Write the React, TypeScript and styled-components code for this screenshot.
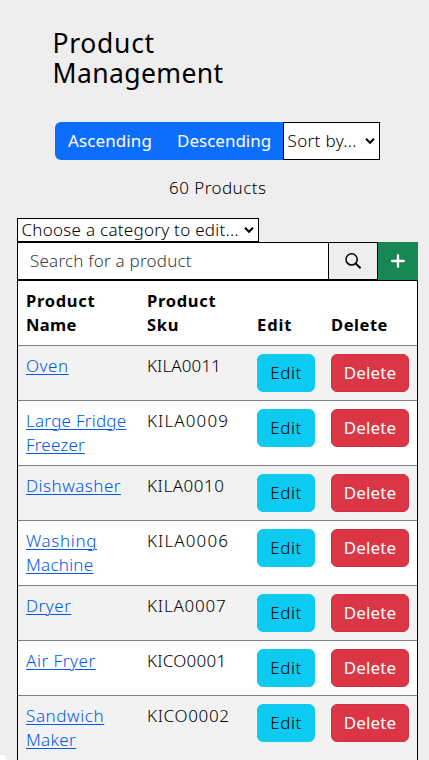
import React from 'react';
import styled, { createGlobalStyle } from 'styled-components';

const GlobalStyle = createGlobalStyle`
  *, *::before, *::after { box-sizing: border-box; }
  body {
    margin: 0;
    height: 100vh;
    overflow: hidden;
    background: #eeeeee;
    color: #000;
    font: 300 17px/24px "Noto Sans", sans-serif;
  }
`;

const Page = styled.main`
  padding: 28px 11px 0 17px;
`;

const Title = styled.h1`
  display: flex;
  flex-direction: column;
  margin: 0 0 34px 35.5px;
  font-size: 26.5px;
  line-height: 30px;
  font-weight: 400;
`;

const Tracked = styled.span<{ $track: number }>`
  letter-spacing: ${({ $track }) => $track}px;
  white-space: nowrap;
`;

const SortBar = styled.div`
  display: flex;
  height: 38px;
  width: 325px;
  margin-left: 38px;
`;

const SortButtons = styled.div`
  display: flex;
  flex: 1;
  background: #0d6efd;
  border-radius: 6px 0 0 6px;
`;

const SortButton = styled.button<{ $width: number }>`
  width: ${({ $width }) => $width}px;
  padding: 0 0 0 13px;
  border: 0;
  background: none;
  color: #fff;
  font: inherit;
  font-weight: 400;
  text-align: left;
`;

const Picker = styled.div<{ $width: number; $height: number }>`
  display: flex;
  align-items: center;
  justify-content: space-between;
  width: ${({ $width }) => $width}px;
  height: ${({ $height }) => $height}px;
  padding: 0 4px 0 3.5px;
  border: 1px solid #000;
  background: #fff;
`;

const Count = styled.p`
  margin: 16px 0 18px 152px;
`;

const SearchRow = styled.div`
  display: flex;
  height: 38px;
`;

const SearchField = styled.div`
  flex: 1;
  display: flex;
  align-items: center;
  padding-left: 12px;
  border: 1px solid #000;
  background: #fff;
  color: #353b41;
`;

const IconButton = styled.button<{ $add?: boolean }>`
  display: flex;
  align-items: center;
  justify-content: center;
  width: ${({ $add }) => ($add ? 40 : 50)}px;
  margin-left: ${({ $add }) => ($add ? 0 : -1)}px;
  padding: 0;
  border: ${({ $add }) => ($add ? '0' : '1px solid #000')};
  background: ${({ $add }) => ($add ? '#198754' : '#eeeeee')};
`;

const Table = styled.section`
  border: 1px solid #000;
  background: #fff;
`;

const Row = styled.div<{ $striped?: boolean }>`
  display: grid;
  grid-template-columns: 121px 110px 74px 1fr;
  padding: 8px 0 8px 8px;
  border-top: 1px solid #808080;
  background: ${({ $striped }) => ($striped ? '#f2f2f2' : '#fff')};
`;

const HeadRow = styled(Row)`
  align-items: end;
  border-top: 0;
  font-weight: 700;
  font-size: 16.5px;
`;

const Cell = styled.div`
  display: flex;
  flex-direction: column;
  align-items: flex-start;
`;

const NameLink = styled.a`
  display: flex;
  flex-direction: column;
  align-items: flex-start;
  color: #0058ee;
  text-decoration: underline;
  text-decoration-thickness: 1px;
  text-underline-offset: 2px;
`;

const ActionButton = styled.button<{ $danger?: boolean }>`
  width: ${({ $danger }) => ($danger ? 78 : 58)}px;
  height: 38px;
  padding: 0;
  border: 1px solid ${({ $danger }) => ($danger ? '#cf2f41' : '#0dcaf0')};
  border-radius: 6px;
  background: ${({ $danger }) => ($danger ? '#dc3545' : '#0dcaf0')};
  color: ${({ $danger }) => ($danger ? '#fff' : '#000')};
  font: inherit;
  font-weight: ${({ $danger }) => ($danger ? 400 : 300)};
`;

const CornerStatus = styled.div`
  position: fixed;
  left: 0;
  bottom: 0;
  width: 6px;
  height: 5px;
  border-radius: 0 2px 0 0;
  background: #fff;
`;

type Word = [text: string, track: number];

const products: { name: Word[]; sku: Word }[] = [
  { name: [['Oven', 0.5]], sku: ['KILA0011', 0.1] },
  { name: [['Large Fridge', 0.25], ['Freezer', 0.2]], sku: ['KILA0009', 1.1] },
  { name: [['Dishwasher', 0.5]], sku: ['KILA0010', 0.55] },
  { name: [['Washing', 0.65], ['Machine', 0.25]], sku: ['KILA0006', 1.1] },
  { name: [['Dryer', 0.5]], sku: ['KILA0007', 0.8] },
  { name: [['Air Fryer', 0.55]], sku: ['KICO0001', 0.25] },
  { name: [['Sandwich', 0.6], ['Maker', 0.3]], sku: ['KICO0002', 0.65] },
];

const headings: Word[][] = [
  [['Product', 0.7], ['Name', 0.35]],
  [['Product', 0.7], ['Sku', 0.7]],
  [['Edit', 0.9]],
  [['Delete', 0.55]],
];

const Words = ({ lines }: { lines: Word[] }) => (
  <>
    {lines.map(([text, track]) => (
      <Tracked key={text} $track={track}>{text}</Tracked>
    ))}
  </>
);

const Chevron = () => (
  <svg width="10" height="8" viewBox="0 0 10 8" fill="none" stroke="#000" strokeWidth="2">
    <path d="M1 1.8 5 5.8 9 1.8" />
  </svg>
);

export default function App() {
  return (
    <>
      <GlobalStyle />
      <Page>
        <Title><Words lines={[['Product', 0.7], ['Management', 0.4]]} /></Title>
        <SortBar>
          <SortButtons>
            <SortButton $width={109}><Tracked $track={0.1}>Ascending</Tracked></SortButton>
            <SortButton $width={119}><Tracked $track={0}>Descending</Tracked></SortButton>
          </SortButtons>
          <Picker $width={97} $height={38}>
            <Tracked $track={0.35}>Sort by...</Tracked>
            <Chevron />
          </Picker>
        </SortBar>
        <Count><Tracked $track={0.45}>60 Products</Tracked></Count>
        <Picker $width={242} $height={24}>
          <Tracked $track={0.27}>Choose a category to edit...</Tracked>
          <Chevron />
        </Picker>
        <SearchRow>
          <SearchField><Tracked $track={0.22}>Search for a product</Tracked></SearchField>
          <IconButton aria-label="Search">
            <svg width="16" height="16" viewBox="0 0 16 16" fill="none" stroke="#000" strokeWidth="1.5">
              <circle cx="6.6" cy="6.4" r="5.6" />
              <path d="m10.6 10.4 5 4.8" strokeWidth="1.9" />
            </svg>
          </IconButton>
          <IconButton $add aria-label="Add product">
            <svg width="14" height="14" viewBox="0 0 14 14" stroke="#fff" strokeWidth="2.3" strokeLinecap="round">
              <path d="M7 1.2v11.6M1.2 7h11.6" />
            </svg>
          </IconButton>
        </SearchRow>
        <Table>
          <HeadRow>
            {headings.map((lines, i) => (
              <Cell key={i}><Words lines={lines} /></Cell>
            ))}
          </HeadRow>
          {products.map(({ name, sku }, i) => (
            <Row key={sku[0]} $striped={i % 2 === 0}>
              <NameLink><Words lines={name} /></NameLink>
              <Cell><Words lines={[sku]} /></Cell>
              <ActionButton><Tracked $track={0.6}>Edit</Tracked></ActionButton>
              <ActionButton $danger><Tracked $track={0.1}>Delete</Tracked></ActionButton>
            </Row>
          ))}
        </Table>
      </Page>
      <CornerStatus />
    </>
  );
}
